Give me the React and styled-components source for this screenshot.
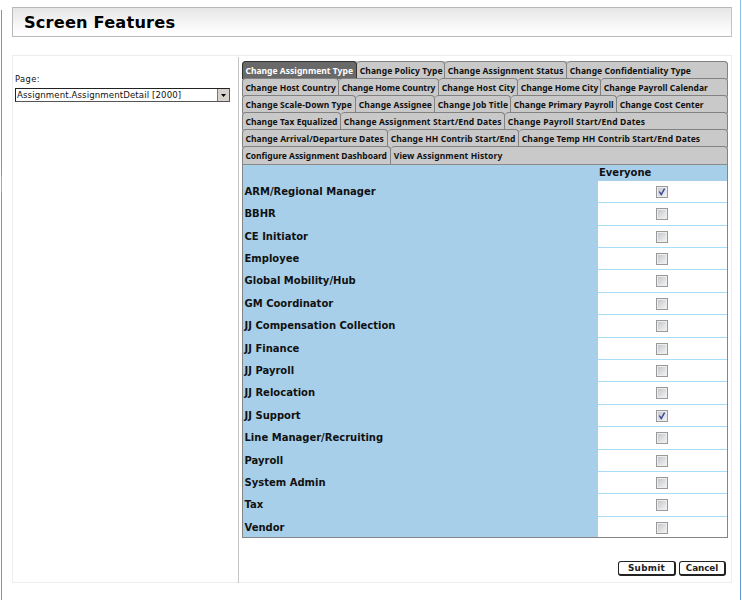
import React from 'react';
import styled, { createGlobalStyle } from 'styled-components';

const Global = createGlobalStyle`
  * { box-sizing: border-box; }
  body { margin: 0; background: #fff; color: #111; font-family: "DejaVu Sans", Verdana, sans-serif; overflow: hidden; }
`;

const Page = styled.div`
  display: flex;
  width: 742px;
  height: 600px;
`;

const LeftRule = styled.div`
  width: 1px;
  margin: 10px 10px 0 1px;
  background: linear-gradient(#7099c2 0 165px, #a8a8a8 167px 181px, #7099c2 183px);
`;

const RightRule = styled.div`
  width: 1px;
  margin-left: 8px;
  background: linear-gradient(#8cc3dc, #8fc0e0 40%, #5f9bd0);
`;

const Main = styled.main`
  width: 720px;
  padding-top: 7px;
`;

const TitleBar = styled.header`
  height: 30px;
  border: 1px solid #b8b8b8;
  border-right-color: #c4c4c4;
  background: linear-gradient(#e6e6e6, #fbfbfb 75%, #fff);
  padding-left: 11px;
`;

const Title = styled.h1`
  margin: 0;
  font-size: 16.2px;
  line-height: 29px;
  letter-spacing: 0.18px;
  color: #000;
  white-space: nowrap;
`;

const Content = styled.section`
  display: flex;
  height: 528px;
  margin-top: 18px;
  border: 1px solid #ededed;
`;

const Sidebar = styled.aside`
  width: 226px;
  height: 526px;
  margin-top: 1px;
  padding: 16px 0 0 2px;
  border-right: 1px solid #c6c6c6;
`;

const FieldLabel = styled.label`
  display: block;
  font-size: 8.3px;
  line-height: 12px;
  letter-spacing: 0.4px;
`;

const Select = styled.div`
  display: flex;
  width: 215px;
  height: 14px;
  margin-top: 3px;
  border: 1px solid #555;
  border-top-color: #222;
  border-left-color: #222;
  background: #fff;
`;

const SelectText = styled.span`
  flex: 1;
  padding-left: 1px;
  font-size: 8.6px;
  line-height: 13px;
  letter-spacing: 0.11px;
  white-space: nowrap;
`;

const SelectArrow = styled.span`
  display: flex;
  align-items: center;
  justify-content: center;
  width: 12px;
  border-left: 1px solid #777;
  background: #d5d3cb;
`;

const Panel = styled.div`
  width: 486px;
  margin: 5px 0 0 3px;
`;

const TabRow = styled.div`
  display: grid;
  grid-template-columns: ${p => p.$cols};
  height: 17px;
`;

const Tab = styled.div`
  height: 100%;
  padding-left: ${p => (p.$first ? 2.4 : 2.8)}px;
  border: 1px solid #828282;
  border-width: 1px 1px 0 ${p => (p.$first ? 1 : 0)}px;
  border-radius: 4px 4px 0 0;
  background: ${p => (p.$active ? '#696969' : '#c9c9c9')};
  border-color: ${p => (p.$active ? '#333' : '#828282')};
  color: ${p => (p.$active ? '#fff' : '#111')};
  font-family: "Noto Sans", Tahoma, sans-serif;
  font-size: 8.5px;
  font-weight: 700;
  line-height: 17px;
  letter-spacing: ${p => p.$spacing}px;
  white-space: nowrap;
`;

const TabArea = styled.div`
  background: #c9c9c9;
  border-radius: 4px 4px 0 0;
`;

const Matrix = styled.div`
  border: 1px solid #858585;
  border-top: 2px solid #8a8a8a;
  background: #a8cfe9;
`;

const Row = styled.div`
  display: grid;
  grid-template-columns: 355px 1fr;
  grid-template-rows: 100%;
  height: ${p => p.$h}px;
  font-size: 10px;
  font-weight: 700;
`;

const Heading = styled.div`
  grid-column: 2;
  padding-left: 1px;
  line-height: 15px;
`;

const RoleName = styled.div`
  padding-left: 1.5px;
  line-height: 22px;
  white-space: nowrap;
`;

const CheckCell = styled.div`
  display: flex;
  align-items: flex-start;
  justify-content: center;
  padding: 5px 1px 0 0;
  border-bottom: ${p => (p.$last ? 0 : 1)}px solid #a9dcf8;
  background: #fff;
`;

const CheckBox = styled.span`
  display: grid;
  place-items: center;
  width: 12px;
  height: 12px;
  border: 1px solid #999;
  background: linear-gradient(135deg, #bfc3c8, #f6f6f6);
  box-shadow: inset 0 0 0 1px #ededed;
`;

const Actions = styled.div`
  display: flex;
  gap: 3px;
  justify-content: flex-end;
  margin: 23px 2px 0 0;
`;

const Button = styled.button`
  width: ${p => p.$w}px;
  height: 15px;
  padding: 0;
  border: 1px solid #222;
  border-width: 1px 2px 2px 1px;
  border-radius: 3px;
  background: #fff;
  color: #222;
  font: 700 8.8px/12px "DejaVu Sans", Verdana, sans-serif;
  letter-spacing: ${p => p.$spacing}px;
`;

const TAB_ROWS = [
  { cols: '115px 88px 122px 161px', tabs: [['Change Assignment Type', 0.03], ['Change Policy Type', 0.08], ['Change Assignment Status', 0.08], ['Change Confidentiality Type', 0.06]] },
  { cols: '97px 100px 79px 83px 127px', tabs: [['Change Host Country'], ['Change Home Country', -0.12], ['Change Host City', 0.03], ['Change Home City', -0.05], ['Change Payroll Calendar', 0.02]] },
  { cols: '114px 79px 76px 106px 111px', tabs: [['Change Scale-Down Type', 0.06], ['Change Assignee', 0.06], ['Change Job Title', 0.1], ['Change Primary Payroll', 0.02], ['Change Cost Center', 0]] },
  { cols: '99px 164px 223px', tabs: [['Change Tax Equalized', 0.05], ['Change Assignment Start/End Dates', 0.13], ['Change Payroll Start/End Dates', 0.17]] },
  { cols: '146px 131px 209px', tabs: [['Change Arrival/Departure Dates', 0.07], ['Change HH Contrib Start/End', 0.04], ['Change Temp HH Contrib Start/End Dates', 0.08]] },
  { cols: '149px 337px', tabs: [['Configure Assignment Dashboard', -0.03], ['View Assignment History', 0.11]] },
];

const ROLES = [
  { name: 'ARM/Regional Manager', h: 22, checked: true },
  { name: 'BBHR', h: 23 },
  { name: 'CE Initiator', h: 22 },
  { name: 'Employee', h: 22 },
  { name: 'Global Mobility/Hub', h: 23 },
  { name: 'GM Coordinator', h: 22 },
  { name: 'JJ Compensation Collection', h: 23 },
  { name: 'JJ Finance', h: 22 },
  { name: 'JJ Payroll', h: 22 },
  { name: 'JJ Relocation', h: 23 },
  { name: 'JJ Support', h: 22, checked: true },
  { name: 'Line Manager/Recruiting', h: 23 },
  { name: 'Payroll', h: 22 },
  { name: 'System Admin', h: 22 },
  { name: 'Tax', h: 23 },
  { name: 'Vendor', h: 20 },
];

const Tick = () => (
  <svg width="10" height="10" viewBox="0 0 10 10">
    <path d="M2.3 4.5 L4.2 7.6 L7.6 1.6" fill="none" stroke="#35449c" strokeWidth="1.4" />
  </svg>
);

export default function App() {
  return (
    <>
      <Global />
      <Page>
        <LeftRule />
        <Main>
          <TitleBar><Title>Screen Features</Title></TitleBar>
          <Content>
            <Sidebar>
              <FieldLabel>Page:</FieldLabel>
              <Select>
                <SelectText>Assignment.AssignmentDetail [2000]</SelectText>
                <SelectArrow>
                  <svg width="5" height="3" viewBox="0 0 5 3"><path d="M0 0H5L2.5 3Z" fill="#000" /></svg>
                </SelectArrow>
              </Select>
            </Sidebar>
            <Panel>
              <TabArea>
                {TAB_ROWS.map((row, r) => (
                  <TabRow key={r} $cols={row.cols}>
                    {row.tabs.map(([name, spacing = 0], i) => (
                      <Tab key={name} $first={i === 0} $active={r === 0 && i === 0} $spacing={spacing}>{name}</Tab>
                    ))}
                  </TabRow>
                ))}
              </TabArea>
              <Matrix>
                <Row $h={16}><Heading>Everyone</Heading></Row>
                {ROLES.map((role, i) => (
                  <Row key={role.name} $h={role.h}>
                    <RoleName>{role.name}</RoleName>
                    <CheckCell $last={i === ROLES.length - 1}>
                      <CheckBox role="checkbox" aria-checked={!!role.checked}>
                        {role.checked && <Tick />}
                      </CheckBox>
                    </CheckCell>
                  </Row>
                ))}
              </Matrix>
              <Actions>
                <Button $w={58} $spacing={0.3}>Submit</Button>
                <Button $w={47} $spacing={-0.1}>Cancel</Button>
              </Actions>
            </Panel>
          </Content>
        </Main>
        <RightRule />
      </Page>
    </>
  );
}
